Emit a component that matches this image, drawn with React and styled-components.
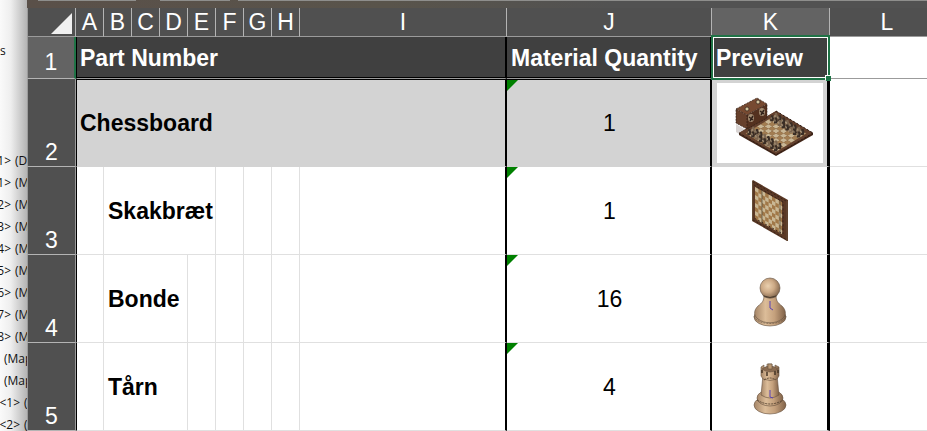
import React from "react";
import styled, { createGlobalStyle, css } from "styled-components";

const GlobalStyle = createGlobalStyle`
  * {
    box-sizing: border-box;
  }

  body {
    margin: 0;
    background: #ffffff;
    overflow: hidden;
  }
`;

const Screen = styled.div`
  display: flex;
  height: 100vh;
  overflow: hidden;
  font-family: "Liberation Sans", Arial, sans-serif;
`;

const SidePanel = styled.aside`
  flex: 0 0 27px;
  overflow: hidden;
  background: linear-gradient(to right, #fafafa, #eeeeee 40%, #b4b4b4);
  color: #111111;
  font-family: "Open Sans", sans-serif;
  font-size: 12px;
  line-height: 22px;
  white-space: pre;
`;

const PanelHeading = styled.div`
  margin-top: 40px;
  margin-bottom: 88px;
`;

const TreeList = styled.ul`
  list-style: none;
  margin: 0;
  padding: 0;
`;

const TreeItem = styled.li`
  display: flex;
  gap: 4px;
  padding-left: ${(props) => (props.$level === "map" ? "4px" : "0")};
`;

const TreeCount = styled.span`
  flex: none;
  display: flex;
  justify-content: flex-end;
  width: ${(props) => (props.$wide ? "20px" : "11px")};
`;

const Workbook = styled.main`
  flex: 1;
  min-width: 0;
  overflow: hidden;
`;

const Ribbon = styled.div`
  display: flex;
  height: 8px;
  padding-left: 11px;
  background: linear-gradient(to right, #5a5049, #59544b 40%, #525252 65%);
`;

const RibbonGroup = styled.div`
  flex: ${(props) => (props.$width ? `0 0 ${props.$width}px` : "1")};
  height: 1px;
  margin-right: ${(props) => props.$gap || 0}px;
  background: #8e8e8c;
`;

const Sheet = styled.table`
  width: max(918px, 100%);
  table-layout: fixed;
  border-collapse: separate;
  border-spacing: 0;
`;

const Column = styled.col`
  width: ${(props) => (props.$width ? `${props.$width}px` : "auto")};
`;

const ColumnHeader = styled.th`
  height: 29px;
  padding: 1px 0 0;
  border-right: 1px solid #b4b4b4;
  border-bottom: 1px solid #9b9b9b;
  background: ${(props) => (props.$active ? "#636363" : "#505050")};
  color: #ffffff;
  font-size: 23px;
  font-weight: 400;
  line-height: 27px;
`;

const Corner = styled.td`
  padding: 0;
  border-left: 1px solid #9b9b9b;
  border-right: 1px solid #b4b4b4;
  border-bottom: 1px solid #9b9b9b;
  background: #505050;
`;

const SelectAll = styled.button`
  display: block;
  width: 21px;
  height: 21px;
  margin: 3px 3px 0 auto;
  padding: 0;
  border: 0;
  background: #f0f0f0;
  clip-path: polygon(100% 0, 100% 100%, 0 100%);
`;

const RowHeader = styled.th`
  padding: 0 0 2px;
  border-left: 1px solid #9b9b9b;
  border-right: 1px solid #9b9b9b;
  border-bottom: 1px solid #b4b4b4;
  background: #505050;
  color: #ffffff;
  font-size: 23px;
  font-weight: 400;
  line-height: 24px;
  vertical-align: bottom;

  ${(props) =>
    props.$active &&
    css`
      padding-bottom: 4px;
      border-right: 2px solid #1f7346;
      background: #636363;
    `}
`;

const Cell = styled.td`
  position: relative;
  height: 88px;
  padding: 0 0 0 4px;
  border-right: 1px solid #e0e0e0;
  border-bottom: 1px solid #e0e0e0;
  background: #ffffff;
  color: #000000;
  font-size: 23px;
  line-height: 28px;
  white-space: nowrap;

  ${(props) =>
    props.$first &&
    css`
      padding-left: 3px;
      border-left: 1px solid #000000;
    `}

  ${(props) =>
    props.$edge &&
    css`
      border-right: ${props.$edge}px solid #000000;
    `}

  ${(props) =>
    props.$filled &&
    css`
      background: #d3d3d3;
      border-bottom-color: #d3d3d3;
      box-shadow: inset 0 1px #000000;
    `}
`;

const NameCell = styled(Cell)`
  font-weight: 700;
`;

const QuantityCell = styled(Cell)`
  padding: 0 0 0 2px;
  text-align: center;

  &::before {
    content: "";
    position: absolute;
    top: ${(props) => (props.$filled ? "1px" : "0")};
    left: 0;
    border-top: 11px solid #008000;
    border-right: 11px solid transparent;
  }
`;

const PreviewCell = styled(Cell)`
  padding: 0 4px 0 5px;
  line-height: 0;
`;

const Preview = styled.svg`
  display: block;
  width: 100%;
  height: 80px;
  background: #ffffff;
`;

const TitleCell = styled(Cell)`
  height: 42px;
  border-bottom: 1px solid #9b9b9b;
  background: ${(props) => (props.$blank ? "#ffffff" : "#404040")};
  color: #ffffff;
  font-weight: 700;
  box-shadow: ${(props) => (props.$blank ? "none" : "inset 0 -1px #000000")};
`;

const Selection = styled.div`
  position: absolute;
  z-index: 1;
  inset: -2px -3px -2px -1px;
  border: 2px solid #1f7346;
  box-shadow: inset 0 0 0 1px #ffffff;

  &::after {
    content: "";
    position: absolute;
    right: -3px;
    bottom: -3px;
    width: 5px;
    height: 5px;
    background: #1f7346;
    box-shadow: -1px -1px #ffffff;
  }
`;

const setSquares = Array.from({ length: 64 }, (_, i) => ({
  u: i % 8,
  v: Math.floor(i / 8),
  x: 776 + (i % 8) * 3.8 - Math.floor(i / 8) * 3.8,
  y: 114 + (i % 8) * 2.3 + Math.floor(i / 8) * 2.3,
}));

const BoardSetDrawing = () => (
  <Preview viewBox="717 82 106 80" role="img" aria-label="Chessboard">
    <path d="M736 123v8l14 9 4-6z" fill="#d9d4d3" />
    <path d="M739 132l37-22 37 22v2l-37 21-37-21z" fill="#432719" />
    <path d="M739 132l37-22 37 22-37 21z" fill="#63402d" />
    {setSquares.map(({ u, v, x, y }) => (
      <path
        key={`${u}-${v}`}
        d={`M${x} ${y}l3.8 2.3-3.8 2.3-3.8-2.3z`}
        fill={(u + v) % 2 ? "#a27d51" : "#c9b795"}
      />
    ))}
    {setSquares
      .filter(({ v }) => v < 2 || v > 5)
      .map(({ u, v, x, y }) => (
        <g key={`${u}-${v}`}>
          <path
            d={`M${x - 1} ${y - 2}h2l1 4-1 2h-3v-2z`}
            fill={(u + v) % 3 ? "#3a2d25" : "#7c6650"}
          />
          <path d={`M${x - 1} ${y}v2M${x + 2} ${y + 2}v1`} stroke="#bba78a" strokeWidth="0.8" />
        </g>
      ))}
    <path
      d="M739 132l37 22 37-22M776 110l37 22"
      fill="none"
      stroke="#2e1c15"
      strokeDasharray="2 2"
    />
    <path d="M736 108l21-11 10 6-20 11z" fill="#774a31" />
    <path d="M736 108l11 6v14l-11-6z" fill="#66402c" />
    <path d="M747 114l20-11v14l-20 11z" fill="#54311f" />
    <path
      d="M736 108l21-11 10 6v14l-20 11-11-6zl11 6 20-11M747 114v14"
      fill="none"
      stroke="#2e1c15"
      strokeWidth="0.7"
      strokeDasharray="2 1"
    />
    <g fill="#d3c49d" stroke="#302019" strokeWidth="0.7">
      <circle cx="747" cy="108" r="2" />
      <circle cx="758" cy="101" r="2" />
    </g>
    <g fill="#a38d73">
      <ellipse cx="751" cy="117" rx="3" ry="4" />
      <ellipse cx="762" cy="111" rx="3" ry="4" />
    </g>
    <path d="M749 116l4 3m-3 1l3-5m7-5l4 3m-3 1l3-5" stroke="#302019" strokeWidth="1.5" />
  </Preview>
);

const wallSquares = Array.from({ length: 64 }, (_, i) => ({
  col: i % 8,
  row: Math.floor(i / 8),
})).filter(({ col, row }) => (col + row) % 2 === 0);

const BoardDrawing = () => (
  <Preview viewBox="717 170 106 80" role="img" aria-label="Skakbræt">
    <path d="M752 180l1-1 35 20v41h-1l-35-20z" fill="#5a3825" />
    <path d="M755 186l27 15v32l-27-15z" fill="#a17848" />
    {wallSquares.map(({ col, row }) => (
      <path
        key={`${row}-${col}`}
        d={`M${755 + col * 3.4} ${186 + col * 1.9 + row * 4}l3.4 1.9v4l-3.4-1.9z`}
        fill="#c9b794"
      />
    ))}
    <path d="M762 189v33M780 199v34" stroke="#5c5342" strokeWidth="0.8" />
    <path
      d="M753 181l33 19M753 219l34 20M754 184l29 17v32l-29-16"
      fill="none"
      stroke="#38241a"
      strokeDasharray="2 2"
    />
    <path d="M787 200v40M752.5 180v40" stroke="#67533c" strokeWidth="0.8" />
  </Preview>
);

const WoodGradient = ({ id }) => (
  <linearGradient id={id}>
    <stop offset="0" stopColor="#a58567" />
    <stop offset="0.35" stopColor="#dcbd99" />
    <stop offset="0.65" stopColor="#c4a07c" />
    <stop offset="1" stopColor="#806249" />
  </linearGradient>
);

const PawnDrawing = () => (
  <Preview viewBox="717 258 106 80" role="img" aria-label="Bonde">
    <defs>
      <WoodGradient id="pawnWood" />
      <radialGradient id="pawnHead" cx="0.4" cy="0.4" r="0.65">
        <stop offset="0" stopColor="#ead0af" />
        <stop offset="0.5" stopColor="#cca985" />
        <stop offset="1" stopColor="#80644b" />
      </radialGradient>
    </defs>
    <g stroke="#63503f" strokeWidth="0.6">
      <ellipse cx="770" cy="316" rx="16" ry="9" fill="url(#pawnWood)" />
      <path
        d="M764 294c0 6-2 8-6 11-5 5-4 10 0 13 6 5 18 5 24 0 4-3 5-8 0-13-4-3-6-5-6-11z"
        fill="url(#pawnWood)"
      />
      <path d="M754 315c3 10 29 10 32 0" fill="none" strokeDasharray="2 1" />
      <ellipse cx="770" cy="294" rx="7" ry="3" fill="#a8876a" />
      <circle cx="770" cy="287" r="10" fill="url(#pawnHead)" />
    </g>
    <path d="M764 295q6 3 12 0" fill="none" stroke="#4c3d2f" />
    <path d="M770 300v7l3 2" fill="none" stroke="#5b43b4" />
  </Preview>
);

const RookDrawing = () => (
  <Preview viewBox="717 346 106 80" role="img" aria-label="Tårn">
    <defs>
      <WoodGradient id="rookWood" />
    </defs>
    <g stroke="#66513e" strokeWidth="0.6">
      <ellipse cx="770" cy="404" rx="16" ry="9" fill="url(#rookWood)" />
      <ellipse cx="770" cy="397" rx="13" ry="8" fill="url(#rookWood)" />
      <path d="M763 374l-2 20q9 6 18 0l-2-20z" fill="url(#rookWood)" />
      <path
        d="M761 366l3-2v3l3-1v-3h5v3l3 1v-3l4 2v9l-2 3q-7 3-14 0l-2-3z"
        fill="url(#rookWood)"
      />
      <path d="M762 368q8-6 16 0-8 6-16 0" fill="#8a6b50" />
      <path d="M768 363h4v5h-4z" fill="#bb9974" />
    </g>
    <path d="M767 371v4M775 370v4M762 369v3M778 369v3" stroke="#443426" strokeWidth="1.5" />
    <path
      d="M764 379q6-4 12 0M757 399q13 8 26 0"
      fill="none"
      stroke="#5c4936"
      strokeDasharray="2 1"
    />
    <path d="M770 389v7l3 1" fill="none" stroke="#5b43b4" />
  </Preview>
);

// the last column takes what is left of the window
const columns = [
  { name: "A", width: 28 },
  { name: "B", width: 28 },
  { name: "C", width: 28 },
  { name: "D", width: 28 },
  { name: "E", width: 28 },
  { name: "F", width: 28 },
  { name: "G", width: 28 },
  { name: "H", width: 28 },
  { name: "I", width: 207 },
  { name: "J", width: 205 },
  { name: "K", width: 118 },
  { name: "L" },
];

// a name covers `span` columns and is followed by `after` empty ones
const parts = [
  { name: "Skakbræt", span: 4, after: 3, quantity: 1, Drawing: BoardDrawing },
  { name: "Bonde", span: 3, after: 4, quantity: 16, Drawing: PawnDrawing },
  { name: "Tårn", span: 3, after: 4, quantity: 4, Drawing: RookDrawing },
];

const treeItems = [
  { count: "1>", label: "(D" },
  { count: "1>", label: "(M" },
  { count: "2>", label: "(M" },
  { count: "3>", label: "(M" },
  { count: "4>", label: "(M" },
  { count: "5>", label: "(M" },
  { count: "6>", label: "(M" },
  { count: "7>", label: "(M" },
  { count: "8>", label: "(M" },
  { label: "(Map", level: "map" },
  { label: "(Map", level: "map" },
  { count: "<1>", label: "(", wide: true },
  { count: "<2>", label: "(", wide: true },
];

function PartRow({ part, number }) {
  const { Drawing } = part;
  return (
    <tr>
      <RowHeader scope="row">{number}</RowHeader>
      <Cell $first />
      <NameCell colSpan={part.span}>{part.name}</NameCell>
      {Array.from({ length: part.after }, (_, i) => (
        <Cell key={i} />
      ))}
      <Cell $edge={2} />
      <QuantityCell $edge={2}>{part.quantity}</QuantityCell>
      <PreviewCell $edge={3}>
        <Drawing />
      </PreviewCell>
      <Cell />
    </tr>
  );
}

export default function App() {
  return (
    <Screen>
      <GlobalStyle />
      <SidePanel>
        <PanelHeading>s</PanelHeading>
        <TreeList>
          {treeItems.map((item, index) => (
            <TreeItem key={index} $level={item.level}>
              {item.count && <TreeCount $wide={item.wide}>{item.count}</TreeCount>}
              <span>{item.label}</span>
            </TreeItem>
          ))}
        </TreeList>
      </SidePanel>
      <Workbook>
        <Ribbon>
          <RibbonGroup $width={98} $gap={24} />
          <RibbonGroup $width={70} $gap={8} />
          <RibbonGroup />
        </Ribbon>
        <Sheet>
          <colgroup>
            <Column $width={49} />
            {columns.map((column) => (
              <Column key={column.name} $width={column.width} />
            ))}
          </colgroup>
          <thead>
            <tr>
              <Corner>
                <SelectAll type="button" aria-label="Select all" />
              </Corner>
              {columns.map((column) => (
                <ColumnHeader key={column.name} scope="col" $active={column.name === "K"}>
                  {column.name}
                </ColumnHeader>
              ))}
            </tr>
          </thead>
          <tbody>
            <tr>
              <RowHeader scope="row" $active>
                1
              </RowHeader>
              <TitleCell colSpan={9} $first $edge={2}>
                Part Number
              </TitleCell>
              <TitleCell $edge={2}>Material Quantity</TitleCell>
              <TitleCell $edge={3}>
                Preview
                <Selection />
              </TitleCell>
              <TitleCell $blank />
            </tr>
            <tr>
              <RowHeader scope="row">2</RowHeader>
              <NameCell colSpan={9} $first $edge={2} $filled>
                Chessboard
              </NameCell>
              <QuantityCell $edge={2} $filled>
                1
              </QuantityCell>
              <PreviewCell $edge={3} $filled>
                <BoardSetDrawing />
              </PreviewCell>
              <Cell />
            </tr>
            {parts.map((part, index) => (
              <PartRow key={part.name} part={part} number={index + 3} />
            ))}
          </tbody>
        </Sheet>
      </Workbook>
    </Screen>
  );
}
